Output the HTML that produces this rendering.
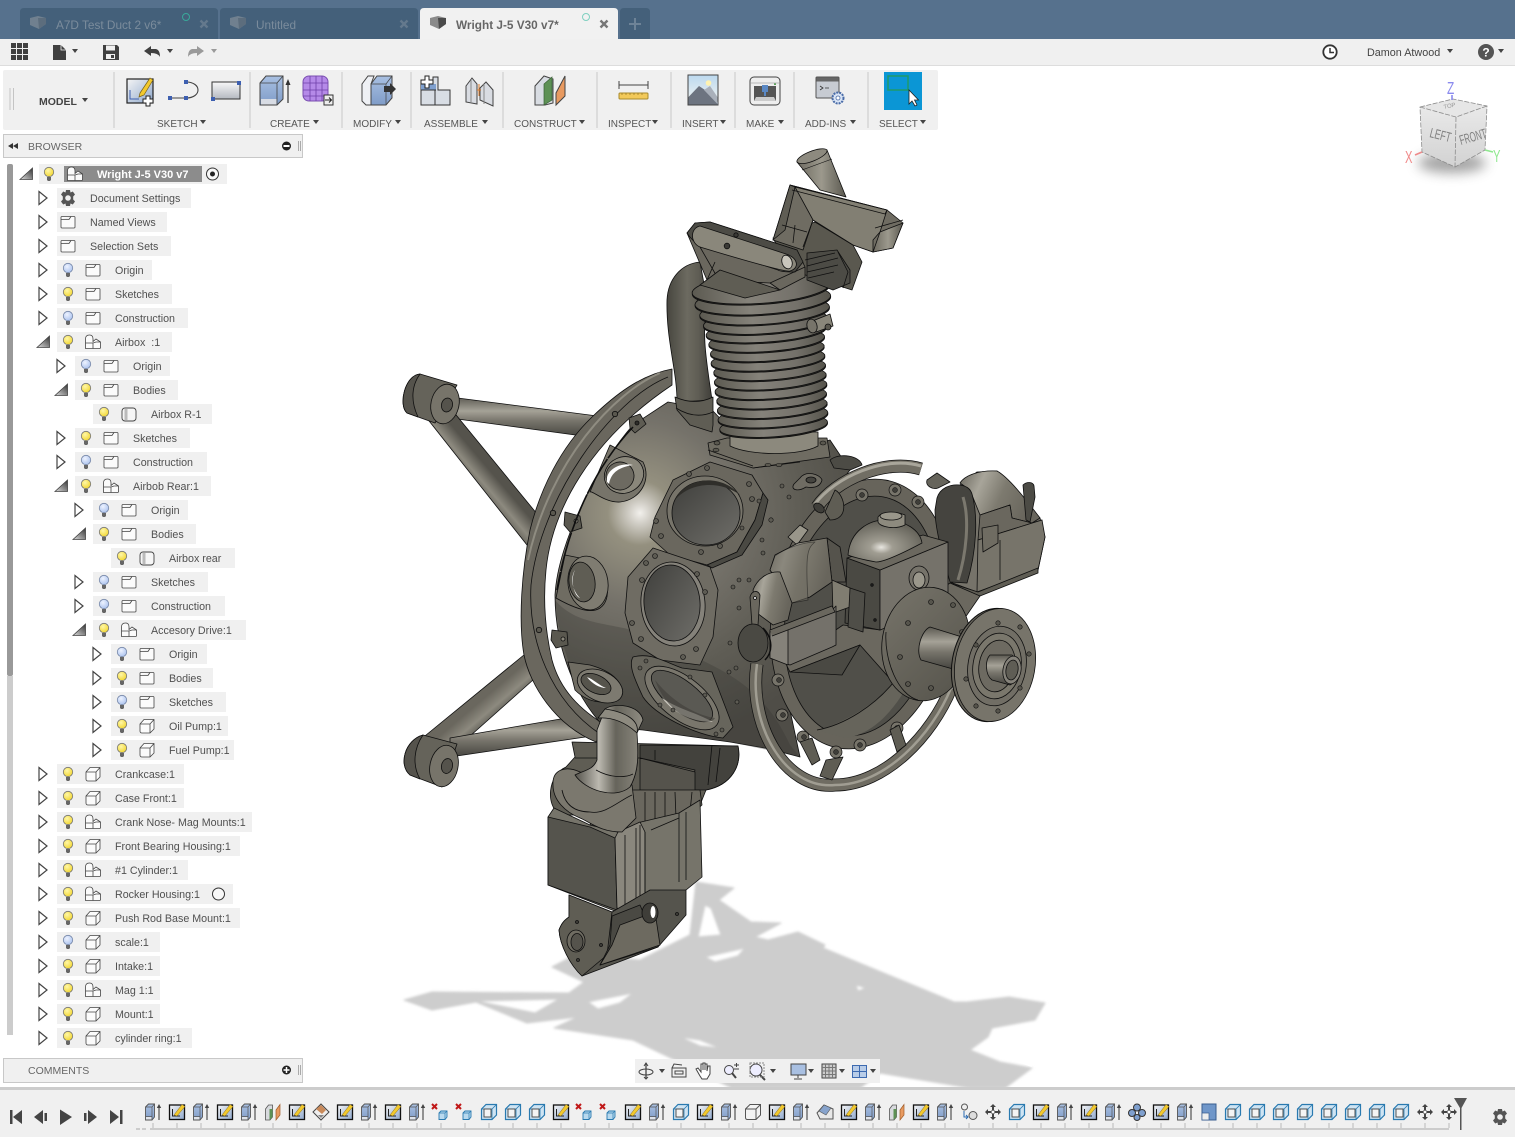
<!DOCTYPE html>
<html><head><meta charset="utf-8"><title>Wright J-5 V30 v7</title>
<style>
html,body{margin:0;padding:0;background:#fff;width:1515px;height:1137px;overflow:hidden}
svg{display:block}
text{font-family:"Liberation Sans",sans-serif}
.t{font-size:10.7px;fill:#505050}
.l{font-size:10px;fill:#555}
</style></head><body>
<svg width="1515" height="1137" viewBox="0 0 1515 1137" xmlns="http://www.w3.org/2000/svg">
<defs>
<radialGradient id="caseG" gradientUnits="userSpaceOnUse" cx="640" cy="513" r="230"><stop offset="0" stop-color="#f2f0ec"/><stop offset=".05" stop-color="#cfccc4"/><stop offset=".14" stop-color="#94907f"/><stop offset=".4" stop-color="#75726a"/><stop offset=".7" stop-color="#5f5d55"/><stop offset="1" stop-color="#4f4d47"/></radialGradient>
<linearGradient id="tV" x1="0" y1="0" x2="0" y2="1"><stop offset="0" stop-color="#5b5951"/><stop offset=".35" stop-color="#a5a297"/><stop offset=".6" stop-color="#77746b"/><stop offset="1" stop-color="#45443f"/></linearGradient>
<linearGradient id="tD" x1="0" y1="1" x2="1" y2="0"><stop offset="0" stop-color="#5d5b53"/><stop offset=".5" stop-color="#8d8a7f"/><stop offset="1" stop-color="#5d5b53"/></linearGradient>
<linearGradient id="tD1" gradientUnits="userSpaceOnUse" x1="470" y1="710" x2="487" y2="730"><stop offset="0" stop-color="#6a675e"/><stop offset=".5" stop-color="#8d8a7f"/><stop offset="1" stop-color="#4d4c46"/></linearGradient>
<linearGradient id="tD2" gradientUnits="userSpaceOnUse" x1="468" y1="485" x2="488" y2="468"><stop offset="0" stop-color="#55534c"/><stop offset=".5" stop-color="#8d8a7f"/><stop offset="1" stop-color="#55534c"/></linearGradient>
<linearGradient id="tH" x1="0" y1="0" x2="1" y2="0"><stop offset="0" stop-color="#47463f"/><stop offset=".45" stop-color="#6c6a60"/><stop offset=".7" stop-color="#5f5d54"/><stop offset="1" stop-color="#3f3e39"/></linearGradient>
<linearGradient id="pH" x1="0" y1="0" x2="1" y2="0"><stop offset="0" stop-color="#55534c"/><stop offset=".35" stop-color="#bcb9b0"/><stop offset=".6" stop-color="#66645b"/><stop offset="1" stop-color="#8f8c82"/></linearGradient>
<linearGradient id="fin" x1="0" y1="0" x2="1" y2="0"><stop offset="0" stop-color="#5c5a51"/><stop offset=".4" stop-color="#85827a"/><stop offset=".75" stop-color="#74716a"/><stop offset="1" stop-color="#55534b"/></linearGradient>
<linearGradient id="hole" x1="0" y1="0" x2="1" y2="1"><stop offset="0" stop-color="#3f3f3c"/><stop offset="1" stop-color="#6f6e69"/></linearGradient>
<radialGradient id="dome" cx=".45" cy=".65" r=".6"><stop offset="0" stop-color="#e8e6e0"/><stop offset=".25" stop-color="#a09d92"/><stop offset="1" stop-color="#66645b"/></radialGradient>
<linearGradient id="sh" x1="0" y1="0" x2="1" y2="0"><stop offset="0" stop-color="#6d6a60"/><stop offset=".5" stop-color="#9c998d"/><stop offset="1" stop-color="#5a584f"/></linearGradient>
<linearGradient id="hood" x1="0" y1="0" x2="1" y2=".3"><stop offset="0" stop-color="#6a675e"/><stop offset=".3" stop-color="#a8a59a"/><stop offset=".6" stop-color="#7d7a6f"/><stop offset="1" stop-color="#68655c"/></linearGradient>
<linearGradient id="disc" x1="0" y1="0" x2="1" y2="1"><stop offset="0" stop-color="#77746a"/><stop offset="1" stop-color="#55534b"/></linearGradient>
<linearGradient id="blu" x1="0" y1="0" x2="0" y2="1"><stop offset="0" stop-color="#a9c0e2"/><stop offset="1" stop-color="#7f9cc8"/></linearGradient>
<linearGradient id="gr" x1="0" y1="0" x2="0" y2="1"><stop offset="0" stop-color="#f8f8f8"/><stop offset="1" stop-color="#b4b8c0"/></linearGradient>
<linearGradient id="sk" x1="0" y1="0" x2="1" y2="1"><stop offset="0" stop-color="#f5f5f5"/><stop offset="1" stop-color="#8fa8cc"/></linearGradient>
<linearGradient id="cube" x1="0" y1="0" x2="0" y2="1"><stop offset="0" stop-color="#ececec"/><stop offset="1" stop-color="#d2d2d2"/></linearGradient>
<linearGradient id="opn" x1="0" y1="1" x2="1" y2="0"><stop offset="0" stop-color="#ddd"/><stop offset="1" stop-color="#333"/></linearGradient>
<linearGradient id="sky" x1="0" y1="0" x2="0" y2="1"><stop offset="0" stop-color="#bcd9ef"/><stop offset="1" stop-color="#f5f5f0"/></linearGradient>
<radialGradient id="yb" cx=".4" cy=".35" r=".7"><stop offset="0" stop-color="#fff7a8"/><stop offset="1" stop-color="#f1d52c"/></radialGradient>
<radialGradient id="bb" cx=".4" cy=".35" r=".7"><stop offset="0" stop-color="#eef3ff"/><stop offset="1" stop-color="#a9c1ee"/></radialGradient>
<filter id="blur" x="-50%" y="-100%" width="200%" height="300%"><feGaussianBlur stdDeviation="6"/></filter>
<filter id="blur1" x="-5%" y="-5%" width="110%" height="110%"><feGaussianBlur stdDeviation="1.200"/></filter>

<path id="ar" d="M-4,-6.5 L4,0 L-4,6.5Z" fill="#fff" stroke="#444" stroke-width="1.2"/>
<path id="op" d="M-7,5.5 L5.5,5.5 L5.5,-6Z" fill="url(#opn)" stroke="#444" stroke-width=".8"/>
<g id="by"><circle cy="-2" r="4.7" fill="url(#yb)" stroke="#777" stroke-width=".8"/><path d="M-2,3 H2 V6 L1,7 H-1 L-2,6Z" fill="#666"/></g>
<g id="bl"><circle cy="-2" r="4.7" fill="url(#bb)" stroke="#7788a8" stroke-width=".8"/><path d="M-2,3 H2 V6 L1,7 H-1 L-2,6Z" fill="#666"/></g>
<path id="fd" d="M-7,-4.5 Q-7,-5.5 -6,-5.5 H6 Q7,-5.5 7,-4.5 V5 Q7,6 6,6 H-6 Q-7,6 -7,5Z M-7,-2.5 H1 L3,-5.5" fill="#fbfbfb" stroke="#444" stroke-width=".8"/>
<path id="cp" d="M-7.5,6.5 V-3 Q-7.5,-7 -3.5,-7 Q0,-7 0,-3 V-.5 L3,-3 L7.5,0 V5.5 Q7.5,6.5 6.5,6.5Z M-7.5,1 H0 V6.500 M0,1 L3,0 L7.5,0" fill="#fbfbfb" stroke="#444" stroke-width=".8"/>
<path id="bx" d="M-7,-2 L-3,-6.5 H7 V3 L3,7 H-5 Q-7,7 -7,5Z M-7,-2 Q-2,-2 3,-2 V7 M3,-2 L7,-6.5" fill="#fbfbfb" stroke="#444" stroke-width=".8"/>
<g id="bd"><rect x="-7" y="-6" width="14" height="13" rx="3" fill="#f6f6f6" stroke="#444" stroke-width=".9"/><path d="M-3,-5 V6" stroke="#bbb" stroke-width="3"/></g>
<path id="dn" d="M-3,-2 H3 L0,2Z" fill="#444"/>

<g id="te"><path d="M-7.5,-5 L-4.5,-8 H1.5 V5 L-1,8 H-7.5Z" fill="url(#blu)" stroke="#555" stroke-width=".9"/><path d="M-7.5,-5 H-1 V8 M-1,-5 L1.5,-8 M-7.5,4.5 H-1" fill="none" stroke="#555" stroke-width=".7"/><path d="M-7,5 H-1.5 V7.5 H-7Z" fill="#dfe3ea"/><path d="M6,8 V-6" stroke="#444" stroke-width="1.1"/><path d="M3.8,-4 L6,-8 L8.2,-4Z" fill="#444"/></g>
<g id="ts"><rect x="-7.5" y="-7" width="15" height="14.5" fill="url(#sk)" stroke="#111" stroke-width="1.3"/><path d="M-4.5,-3 V4 H3" stroke="#222" fill="none"/><path d="M-3,3 L5,-7.5 L8,-5.5 L0,4Z" fill="#f2c92e" stroke="#8a6d1a" stroke-width=".5"/></g>
<g id="tx"><path d="M-9,-8 L-4,-3 M-4,-8 L-9,-3" stroke="#c01818" stroke-width="2"/><path d="M-2,1 L0,-1 H6 V5 L4,7.5 H-2Z" fill="#b9d9ee" stroke="#2a7ab0" stroke-width=".9"/><path d="M-2,1 H4 V7.5 M4,1 L6,-1" fill="none" stroke="#2a7ab0" stroke-width=".7"/></g>
<g id="tb"><path d="M-7.5,-3 L-3,-7.5 H7.5 V3 L3,7.5 H-7.5Z" fill="#cfe4f3" stroke="#2a7ab0" stroke-width="1.2"/><path d="M-7.5,-3 H3 V7.5 M3,-3 L7.5,-7.5" fill="none" stroke="#2a7ab0" stroke-width=".8"/><rect x="-5" y="-3" width="7" height="8" fill="#f4f4f4" stroke="#444" stroke-width=".9"/></g>
<g id="tp"><path d="M-7.5,-3 L-4.5,-7 H-.5 V5 L-3,8 H-7.5Z" fill="#d8dade" stroke="#555" stroke-width=".8"/><path d="M-3.5,-3 H-.5 V5 L-3.5,8Z" fill="#5d9155"/><path d="M3,-2 L7,-7.5 V3 L3,8Z" fill="#e89a60" stroke="#a05c2a" stroke-width=".7"/></g>
<g id="tm"><path d="M0,-8 L3,-5 H1 V-2 H-1 V-5 H-3Z M0,8 L3,5 H1 V2 H-1 V5 H-3Z M-8,0 L-5,-3 V-1 H-2 V1 H-5 V3Z M8,0 L5,-3 V-1 H2 V1 H5 V3Z" fill="#444"/><circle r="1.8" fill="#fff" stroke="#555" stroke-width=".8"/></g>
<g id="tsb"><path d="M-7,-8 H7 V8 H-7Z" fill="#6f96c9" stroke="#3a5e90"/><path d="M-7,1 H0 V8 H-7Z" fill="#eee" stroke="#3a5e90" stroke-width=".7"/></g>
</defs>

<!-- TITLE BAR -->
<rect width="1515" height="39" fill="#56718d"/>
<path d="M20,39 V12 Q20,8 24,8 H214 Q218,8 218,12 V39Z" fill="#44607a"/>
<path d="M220,39 V12 Q220,8 224,8 H414 Q418,8 418,12 V39Z" fill="#44607a"/>
<path d="M420,39 V12 Q420,8 424,8 H614 Q618,8 618,12 V39Z" fill="#f1f1f1"/>
<path d="M620,39 V12 Q620,8 624,8 H646 Q650,8 650,12 V39Z" fill="#44607a"/>
<path d="M30,18 L38,16 L46,18 V24 L39,29 L30,25Z" fill="#70808f"/><path d="M38,18 L46,18 V24 L39,29Z" fill="#5c6d7d"/>
<path d="M230,18 L238,16 L246,18 V24 L239,29 L230,25Z" fill="#70808f"/><path d="M238,18 L246,18 V24 L239,29Z" fill="#5c6d7d"/>
<path d="M430,18 L438,16 L446,18 V24 L439,29 L430,25Z" fill="#8a8a8a"/><path d="M438,18 L446,18 V24 L439,29Z" fill="#4a4a4a"/>
<text x="56" y="29" font-size="11.8" fill="#7b8c9c">A7D Test Duct 2 v6*</text>
<text x="256" y="29" font-size="11.8" fill="#7b8c9c">Untitled</text>
<text x="456" y="29" font-size="11.8" font-weight="bold" fill="#666">Wright J-5 V30 v7*</text>
<circle cx="186" cy="17" r="3.5" fill="none" stroke="#3aa89a" stroke-width="1"/>
<circle cx="586" cy="17" r="3.5" fill="none" stroke="#7fd0c0" stroke-width="1"/>
<path d="M200.5,20.5 L207.5,27.5 M207.5,20.5 L200.5,27.5 M400.5,20.5 L407.5,27.5 M407.5,20.5 L400.5,27.5" stroke="#64798d" stroke-width="2.4"/>
<path d="M600.5,20.5 L607.5,27.5 M607.5,20.5 L600.5,27.5" stroke="#777" stroke-width="2.4"/>
<path d="M635,18 V30 M629,24 H641" stroke="#6e8397" stroke-width="2"/>

<!-- MENU BAR -->
<rect y="39" width="1515" height="26" fill="#f0f0f0"/><rect y="65" width="1515" height="1" fill="#ddd"/>
<g fill="#404040"><rect x="11" y="43" width="5" height="5"/><rect x="17" y="43" width="5" height="5"/><rect x="23" y="43" width="5" height="5"/><rect x="11" y="49" width="5" height="5"/><rect x="17" y="49" width="5" height="5"/><rect x="23" y="49" width="5" height="5"/><rect x="11" y="55" width="5" height="5"/><rect x="17" y="55" width="5" height="5"/><rect x="23" y="55" width="5" height="5"/></g>
<path d="M53,45 H61 L66,50 V60 H53Z" fill="#404040"/><path d="M61,45 V50 H66" fill="none" stroke="#f0f0f0" stroke-width=".8"/>
<use href="#dn" x="75" y="51"/>
<path d="M103,45 H117 L119,47 V60 H103Z" fill="#404040"/><rect x="106" y="45.5" width="9" height="5" fill="#f0f0f0"/><rect x="106" y="54" width="9" height="5" fill="#f0f0f0"/><rect x="111" y="55" width="3" height="3" fill="#404040"/>
<path d="M144,51 L151,46 V49 H156 Q160,50 160,57 Q158,53 151,53 V56Z" fill="#404040"/><use href="#dn" x="170" y="51"/>
<path d="M204,51 L197,46 V49 H192 Q188,50 188,57 Q190,53 197,53 V56Z" fill="#9a9a9a"/><use href="#dn" x="214" y="51" opacity=".5"/>
<circle cx="1330" cy="52" r="6.7" fill="#fff" stroke="#333" stroke-width="1.8"/><path d="M1330,48 V52.5 H1334" fill="none" stroke="#333" stroke-width="1.5"/>
<text x="1367" y="56" font-size="10.8" fill="#444">Damon Atwood</text><use href="#dn" x="1450" y="51"/>
<circle cx="1486" cy="52" r="8" fill="#555"/><text x="1486" y="56.5" font-size="12" font-weight="bold" fill="#fff" text-anchor="middle">?</text><use href="#dn" x="1501" y="51"/>

<!-- TOOLBAR -->
<rect x="3" y="70" width="935" height="60" rx="2" fill="#f0f0f0"/>
<path d="M10,88 V110 M13.5,88 V110" stroke="#c4c4c4"/>
<g fill="#dcdcdc"><rect x="113" y="72" width="2" height="56"/><rect x="249" y="72" width="2" height="56"/><rect x="341" y="72" width="2" height="56"/><rect x="410" y="72" width="2" height="56"/><rect x="502" y="72" width="2" height="56"/><rect x="596" y="72" width="2" height="56"/><rect x="670" y="72" width="2" height="56"/><rect x="734" y="72" width="2" height="56"/><rect x="793" y="72" width="2" height="56"/><rect x="867" y="72" width="2" height="56"/></g>
<text x="39" y="105" font-size="10.5" font-weight="bold" fill="#444">MODEL</text><use href="#dn" x="85" y="100"/>
<text class="l" x="157" y="127">SKETCH</text><text class="l" x="270" y="127">CREATE</text><text class="l" x="353" y="127">MODIFY</text><text class="l" x="424" y="127">ASSEMBLE</text><text class="l" x="514" y="127">CONSTRUCT</text><text class="l" x="608" y="127">INSPECT</text><text class="l" x="682" y="127">INSERT</text><text class="l" x="746" y="127">MAKE</text><text class="l" x="805" y="127">ADD-INS</text><text class="l" x="879" y="127">SELECT</text>
<use href="#dn" x="203" y="122"/><use href="#dn" x="316" y="122"/><use href="#dn" x="398" y="122"/><use href="#dn" x="485" y="122"/><use href="#dn" x="582" y="122"/><use href="#dn" x="655" y="122"/><use href="#dn" x="723" y="122"/><use href="#dn" x="781" y="122"/><use href="#dn" x="853" y="122"/><use href="#dn" x="923" y="122"/>
<!-- sketch -->
<rect x="127" y="79" width="26" height="24" fill="url(#sk)" stroke="#222" stroke-width="1.2"/><path d="M130,90 V99 H139" stroke="#3d5fb0" fill="none"/><path d="M140,93 L150,78 L153,80 L144,95 L139,97Z" fill="#f2c92e" stroke="#77601c" stroke-width=".7"/>
<path d="M146,96 H150 V99 H153 V103 H150 V106 H146 V103 H143 V99 H146Z" fill="#fff" stroke="#222"/>
<path d="M170,98 H186 M186,82 C202,82 202,98 186,98" fill="none" stroke="#444" stroke-width="1.1"/><g fill="#3d5fb0"><rect x="168" y="96" width="4" height="4"/><rect x="184" y="96" width="4" height="4"/><rect x="184" y="80" width="4" height="4"/></g>
<rect x="212" y="82" width="28" height="17" fill="url(#gr)" stroke="#333"/><g fill="#3d5fb0"><rect x="237" y="81" width="4" height="4"/><rect x="211" y="97" width="4" height="4"/></g>
<!-- create -->
<path d="M260,83 L266,76 H283 V99 L277,105 H260Z" fill="url(#blu)" stroke="#444"/><path d="M260,83 H277 V105 M277,83 L283,76" fill="none" stroke="#444" stroke-width=".8"/><rect x="261" y="99" width="15.5" height="5.5" fill="#d8dce4"/>
<path d="M288,103 V83" stroke="#333" stroke-width="1.2"/><path d="M285.5,85 L288,79 L290.5,85Z" fill="#333"/>
<rect x="303" y="76" width="25" height="25" rx="6" fill="#b58ae8" stroke="#7a4fb0"/><path d="M303,83 H328 M303,90 H328 M303,96 H328 M310,76 V101 M316,76 V101 M322,76 V101" stroke="#6f3fa8" stroke-width=".8"/>
<rect x="324" y="95" width="9" height="10" fill="#eee" stroke="#333"/><path d="M325,100 H331 M329,97.5 L331.5,100 L329,102.5" fill="none" stroke="#222"/>
<!-- modify -->
<path d="M362,101 V84 L368,76 H374 L371,84 V105 H366Z" fill="#eef0f4" stroke="#444"/><path d="M371,84 L377,76 H392 V98 L386,105 H371Z" fill="url(#blu)" stroke="#444"/><path d="M371,84 H386 V105 M386,84 L392,76" fill="none" stroke="#444" stroke-width=".7"/><path d="M384,86 H390 V83 L396,89 L390,95 V92 H384Z" fill="#333"/>
<!-- assemble -->
<path d="M421,84 H433 V77 H438 V90 H450 V105 H421Z" fill="#d8dde4" stroke="#333"/><path d="M421,90 H436 V84 H421Z" fill="#7fa0cf"/><path d="M435,90 V105 M421,90 H436" stroke="#333" fill="none"/><path d="M425,76 H429 V80 H433 V84 H429 V88 H425 V84 H421 V80 H425Z" fill="#fff" stroke="#222"/>
<path d="M466,102 V86 L472,78 L477,84 V104Z M480,100 V88 L486,82 L493,90 V106Z" fill="#d9dce2" stroke="#444"/><path d="M471,80 V102 M484,84 V104" stroke="#888" fill="none"/><path d="M477,90 H481 M479,84 V96" stroke="#d87a2e"/>
<!-- construct -->
<path d="M535,86 L544,76 L553,79 V103 L545,105 H535Z" fill="#d8dce2" stroke="#444"/><path d="M544,84 L552,77 V100 L544,105Z" fill="#5d9155" stroke="#3b6238" stroke-width=".7"/><path d="M556,93 L565,76 V96 L556,105Z" fill="#e89a60" stroke="#444"/>
<!-- inspect -->
<path d="M619,85 H648 M619,81 V89 M648,81 V89" fill="none" stroke="#444"/><rect x="619" y="93" width="29" height="6" rx="1" fill="#f2c95a" stroke="#a88a2e"/><path d="M622,93 V95 M626,93 V95 M630,93 V95 M634,93 V95 M638,93 V95 M642,93 V95" stroke="#8a6a1a" stroke-width=".6"/>
<!-- insert -->
<rect x="688" y="75" width="30" height="30" fill="url(#sky)" stroke="#444"/><circle cx="708.5" cy="83" r="2.8" fill="#fff3b0"/><path d="M688.5,97 L699,86 L708,92 L718,102 V104.5 H688.5Z" fill="#6d7480"/><path d="M704,90 L710,86 L717.5,97 V104 Z" fill="#a9b0ba"/>
<!-- make -->
<rect x="750" y="77" width="30" height="28" rx="4" fill="#eee" stroke="#444"/><rect x="754" y="86" width="22" height="15" fill="#555"/><path d="M756,97 H774 L776,101 H754Z" fill="#ccc"/><rect x="762" y="85" width="6" height="7" fill="#5a88c4"/><path d="M765,92 V96" stroke="#5a88c4" stroke-width="2"/><circle cx="775" cy="84" r="1" fill="#2a8a2a"/><path d="M751,83 H779" stroke="#bbb"/>
<!-- add-ins -->
<rect x="816" y="77" width="23" height="21" rx="1" fill="#c7cbd2" stroke="#555"/><rect x="816.5" y="77.5" width="22" height="4" fill="#666"/><path d="M820,86 L823,88 L820,90 M825,88 H829" fill="none" stroke="#333" stroke-width=".8"/>
<circle cx="838" cy="98" r="5.5" fill="#d9e4f5" stroke="#4a6ca8" stroke-width="2" stroke-dasharray="2 1"/><circle cx="838" cy="98" r="2" fill="#fff" stroke="#4a6ca8" stroke-width=".8"/>
<!-- select -->
<rect x="884" y="72" width="38" height="38" fill="#0b96d5"/><rect x="888" y="76" width="20" height="14" fill="none" stroke="#1f9a6a" stroke-width="1.5"/><path d="M909,90 V104 L912,101 L915,106 L917,105 L914.5,100 L918.5,100Z" fill="#fff" stroke="#222" stroke-width=".8"/>

<!-- VIEWCUBE -->
<ellipse cx="1452" cy="163" rx="34" ry="10" fill="#666" opacity=".6" filter="url(#blur)"/>
<path d="M1420,107 L1453,99 L1487,106 L1485,150 L1455,167 L1422,152Z" fill="url(#cube)"/>
<path d="M1420,107 L1453,99 L1487,106 L1456,117Z" fill="#e6e6e6"/>
<path d="M1420,107 L1453,99 L1487,106 L1485,150 L1455,167 L1422,152Z M1420,107 L1456,117 L1487,106 M1456,117 L1455,167" fill="none" stroke="#8c8c8c" stroke-width=".8" stroke-dasharray="5 1.5"/>
<text transform="translate(1429,137) rotate(14) scale(.8,1.25)" font-size="11" fill="#808080">LEFT</text>
<text transform="translate(1461,145) rotate(-16) scale(.72,1.25)" font-size="11" fill="#808080">FRONT</text>
<text transform="translate(1444,109) rotate(-12)" font-size="6" fill="#999">TOP</text>
<path d="M1452,95 V100" stroke="#8a8aee" stroke-width="1.6"/><path d="M1485,150 L1493,152" stroke="#8fe88f" stroke-width="1.6"/><path d="M1415,155 L1422,152" stroke="#ee8a8a" stroke-width="1.6"/>
<text transform="translate(1447,94) scale(.85,1.25)" font-size="14" fill="#8a8aee">Z</text><text transform="translate(1405,163) scale(.8,1.25)" font-size="14" fill="#f08a8a">X</text><text transform="translate(1493,162) scale(.8,1.25)" font-size="14" fill="#90e890">Y</text>

<!-- SHADOW -->
<g filter="url(#blur1)"><path fill="#cdcdcd" fill-rule="evenodd" stroke="#cdcdcd" stroke-width="1" stroke-linejoin="round" d="M404,1000 L432,992 L569,993 L584,982 L552,967 L575,955 L640,960 L690,935 L696,882 L734,888 L719,900 L751,922 L781,923 L755,937 L768,940 L798,932 L825,945 L823,948 L954,1002 L967,1002 L1009,997 L1045,1003 L1035,1020 L992,1028 L988,1037 L970,1050 L1000,1062 L1032,1068 L1005,1088 L970,1088 L880,1073 L860,1088 L732,1088 L671,1058 L633,1040 L554,1028 L578,1017 L527,1023 L476,1002 L432,1010 Z
M476,1001 L559,999 L535,1013 Z M588,1002 L597,1000 L633,993 L620,1003 L598,1009 Z M705,957 L745,948 L738,956 L715,962 Z M711,908 L721,935 L698,937 L705,905Z M856,985 L866,988 L858,991Z M680,1037 L700,1040 L720,1048 L700,1046Z"/></g>
<path d="M1000,1055 L1032,1066" stroke="#fff" stroke-width="2"/>

<!-- ENGINE -->
<g stroke="#0f0f0f" stroke-width=".8" stroke-linejoin="round">
<!-- mount tubes -->
<path d="M450,397 L605,417 L590,437 L450,418Z" fill="url(#tV)"/>
<path d="M452,410 L422,412 L527,545 L542,520Z" fill="url(#tD2)"/>
<path d="M530,650 L542,672 L460,745 L420,740Z" fill="url(#tD1)"/>
<path d="M450,738 L578,716 L592,736 L450,757Z" fill="url(#tV)"/>
<!-- bosses -->
<path d="M420,374 L457,385 L435,423 L407,413 C398,405 405,375 420,374Z" fill="#65635a"/>
<path d="M420,374 C405,375 398,405 407,413 L418,417 C410,400 412,385 420,374Z" fill="#55534c"/>
<ellipse cx="445" cy="404" rx="14" ry="20" transform="rotate(12 445 404)" fill="#77746a"/>
<ellipse cx="447" cy="405" rx="5.5" ry="7" transform="rotate(12 447 405)" fill="#55534c"/>
<path d="M423,735 L457,744 L442,787 L410,775 C398,765 405,740 423,735Z" fill="#65635a"/>
<path d="M423,735 C405,740 398,765 410,775 L420,779 C412,765 414,748 423,735Z" fill="#55534c"/>
<ellipse cx="444" cy="766" rx="14" ry="21" transform="rotate(12 444 766)" fill="#77746a"/>
<ellipse cx="447" cy="766" rx="5.5" ry="7.5" transform="rotate(12 447 766)" fill="#55534c"/>
<!-- sump behind -->
<path d="M572,742 L738,746 C742,765 732,785 706,790 L700,805 L600,815 L560,815 C545,805 548,775 566,767 L575,757Z" fill="#5f5d54"/>
<path d="M640,745 L738,746 C742,765 732,785 706,790 L690,790 L695,770 L640,758Z" fill="#43423d"/>
<path d="M640,758 L695,772 L695,793 L640,790 Z" fill="#55534c"/>
<path d="M575,758 L640,758 M655,750 V760 M712,745 L708,785 M720,748 L716,782" fill="none"/>
<path d="M600,790 L700,790 L702,805 L680,825 L620,835 L590,825Z" fill="#6a675e"/>
<path d="M645,792 V825 M655,792 V822 M665,792 V820 M675,792 L676,818 M692,792 L690,812" fill="none"/>
<!-- ring -->
<path d="M672,369 C640,375 615,395 592,417 C560,448 540,490 530,530 C522,570 518,620 524,655 C530,685 555,725 596,742 L607,726 C580,710 560,690 552,660 C545,630 543,600 546,570 C552,510 590,440 672,385Z" fill="#6a675e"/>
<path d="M668,377 C610,400 540,500 531,585 C528,640 550,700 600,734" fill="none"/>
<path d="M660,373 C615,392 550,460 528,560" fill="none" stroke="#8f8c81" stroke-width="2"/>
<circle cx="615" cy="414" r="2.700" fill="#5a584f"/><circle cx="553" cy="513" r="2.700" fill="#5a584f"/><circle cx="539" cy="630" r="2.700" fill="#5a584f"/>
<!-- case -->
<path d="M668,402 L633,425 C600,462 558,540 555,595 C555,640 570,690 604,727 L643,730 L730,742 L770,749 L800,757 L775,640 L795,540 L850,470 L830,440 L760,460 L712,410Z" fill="url(#caseG)"/>
<path d="M555,600 C580,630 620,620 660,640 C720,670 760,680 790,745 L800,757 L730,742 L643,730 L604,727 C580,700 560,650 555,600Z" fill="#33322d" opacity=".28" stroke="none"/>
<!-- left ports -->
<path d="M610,445 L643,462 C652,480 640,500 620,502 C605,503 592,490 590,492Z" fill="#77746a"/>
<ellipse cx="624" cy="475" rx="20" ry="18" transform="rotate(-25 624 475)" fill="#8a877b"/><ellipse cx="620" cy="476" rx="14" ry="14" transform="rotate(-25 620 476)" fill="#6d6a61"/>
<path d="M607,482 C605,470 620,462 633,465 C620,467 611,472 609,484Z" fill="#fff" stroke="none"/>
<path d="M565,555 L590,560 C610,575 612,600 600,608 C590,615 570,606 556,598Z" fill="#6f6c62"/>
<ellipse cx="588" cy="583" rx="20" ry="27" transform="rotate(-8 588 583)" fill="#7f7c71"/><ellipse cx="582" cy="582" rx="13" ry="20" transform="rotate(-8 582 582)" fill="#5f5d54"/>
<path d="M575,570 C570,578 572,590 580,598 C574,596 570,580 575,570Z" fill="#fff" stroke="none"/>
<path d="M568,662 L590,665 C615,672 625,685 620,695 C610,705 590,705 575,690Z" fill="#6f6c62"/>
<ellipse cx="600" cy="686" rx="24" ry="15" transform="rotate(25 600 686)" fill="#7d7a70"/><ellipse cx="596" cy="684" rx="16" ry="9" transform="rotate(25 596 684)" fill="#56544c"/>
<path d="M587,677 C593,679 600,686 606,688 C600,688 592,684 587,677Z" fill="#fff" stroke="none"/>
<!-- ring clips -->
<path d="M629,418 L640,414 L646,424 L635,433 L630,428Z" fill="#5e5c53"/><circle cx="637" cy="423" r="2" fill="#2f2e2a"/>
<path d="M565,512 L580,516 L582,528 L570,532 L564,525Z" fill="#5a584f"/><circle cx="576" cy="521" r="2" fill="#8a877b"/>
<path d="M552,630 L567,632 L568,645 L556,648 L551,640Z" fill="#5a584f"/><circle cx="563" cy="639" r="2" fill="#8a877b"/>
<path d="M633,427 C600,462 570,515 557,590" fill="none" stroke-dasharray="40 1" stroke-width="1.6"/>
<!-- flanges -->
<path d="M673,480 L710,462 L752,475 L763,493 L755,520 L737,552 L707,565 L670,555 L650,537 L655,517Z" fill="#6a675e"/>
<path d="M737,552 L755,520 L763,493 L768,500 L762,525 L742,555 L712,568 L707,565Z" fill="#4a4943"/>
<ellipse cx="705" cy="511" rx="38" ry="35" fill="#77746a"/>
<ellipse cx="706" cy="513" rx="34" ry="32" fill="url(#hole)"/>
<path d="M675,500 C685,478 720,472 740,495 C720,480 690,482 675,500Z" fill="#2f2e2a" stroke="none"/>
<path d="M653,548 L710,567 L718,590 L713,637 L700,665 L660,660 L633,643 L625,613 L628,577Z" fill="#6f6c63"/>
<ellipse cx="673" cy="604" rx="32" ry="42" transform="rotate(-5 673 604)" fill="#85827a"/>
<ellipse cx="672" cy="603" rx="28" ry="38" transform="rotate(-5 672 603)" fill="url(#hole)"/>
<path d="M633,657 C650,652 665,662 682,668 L712,672 L733,727 L723,738 C695,735 655,715 643,697 C635,680 628,665 633,657Z" fill="#67655c"/>
<ellipse cx="682" cy="698" rx="44" ry="21" transform="rotate(38 682 698)" fill="#79766c"/>
<ellipse cx="682" cy="696" rx="37" ry="15" transform="rotate(38 682 696)" fill="#5a5953"/>
<path d="M662,698 C675,715 695,722 713,722 C695,712 680,710 662,698Z" fill="#c9c6bc" stroke="none"/>
<path d="M655,680 C675,705 700,716 715,718 C710,728 670,722 655,680Z" fill="#3f3e39" opacity=".6" stroke="none"/>
<!-- flange bolts -->
<g fill="#5d5b53" stroke-width=".6">
<circle cx="689" cy="474" r="2.500"/><circle cx="707" cy="468" r="2.500"/><circle cx="749" cy="484" r="2.500"/><circle cx="752" cy="499" r="2.500"/><circle cx="720" cy="546" r="2.500"/><circle cx="701" cy="552" r="2.500"/><circle cx="661" cy="536" r="2.500"/><circle cx="656" cy="521" r="2.500"/><circle cx="742" cy="528" r="2"/>
<circle cx="646" cy="563" r="2.500"/><circle cx="655" cy="556" r="2.500"/><circle cx="697" cy="574" r="2.500"/><circle cx="705" cy="592" r="2.500"/><circle cx="696" cy="649" r="2.500"/><circle cx="683" cy="657" r="2.500"/><circle cx="641" cy="639" r="2.500"/><circle cx="632" cy="623" r="2.500"/><circle cx="642" cy="580" r="2.500"/>
<circle cx="646" cy="661" r="2"/><circle cx="640" cy="668" r="2"/><circle cx="690" cy="677" r="2"/><circle cx="705" cy="695" r="2"/><circle cx="722" cy="730" r="2"/><circle cx="716" cy="734" r="2"/><circle cx="673" cy="710" r="2"/><circle cx="660" cy="705" r="2"/>
<circle cx="771" cy="520" r="2.200"/><circle cx="762" cy="540" r="2"/><circle cx="763" cy="553" r="2"/><circle cx="749" cy="580" r="2"/><circle cx="739" cy="580" r="2"/><circle cx="739" cy="608" r="2"/><circle cx="733" cy="587" r="2"/><circle cx="730" cy="643" r="2"/><circle cx="729" cy="672" r="2"/><circle cx="736" cy="668" r="2"/><circle cx="737" cy="702" r="2"/><circle cx="761" cy="715" r="2"/>
<circle cx="782" cy="486" r="2"/><circle cx="789" cy="497" r="2"/><circle cx="759" cy="501" r="2"/>
</g>
<path d="M800,478 C806,470 820,474 822,480 C820,488 812,488 806,487 C798,492 790,490 794,484Z" fill="#6f6c63"/><ellipse cx="811" cy="480" rx="5" ry="3" fill="#45443f"/>
<path d="M830,460 C840,452 860,456 862,465 L850,470 L834,468Z" fill="#4c4b45"/>
<!-- rim -->
<ellipse cx="862" cy="614" rx="90" ry="136" transform="rotate(10 862 614)" fill="#67645b"/>
<ellipse cx="862" cy="616" rx="76" ry="121" transform="rotate(10 862 616)" fill="#504f49"/>
<path d="M905,690 C890,715 870,735 845,738 L817,730 C840,725 875,705 893,683Z" fill="#66645b" stroke="none"/>
<path d="M817,730 C845,725 875,705 893,683" fill="none"/>
<g fill="#77746a" stroke-width=".7"><circle cx="778" cy="680" r="6"/><circle cx="782" cy="715" r="6"/><circle cx="803" cy="737" r="6"/><circle cx="836" cy="752" r="6"/><circle cx="860" cy="745" r="6"/><circle cx="897" cy="728" r="6"/><circle cx="862" cy="495" r="6"/><circle cx="895" cy="490" r="6"/><circle cx="918" cy="502" r="6"/></g>
<g fill="#3f3e39" stroke-width=".5"><circle cx="779" cy="680" r="2.500"/><circle cx="783" cy="715" r="2.500"/><circle cx="804" cy="737" r="2.500"/><circle cx="836" cy="752" r="2.500"/><circle cx="860" cy="745" r="2.500"/><circle cx="897" cy="728" r="2.500"/><circle cx="862" cy="495" r="2.500"/><circle cx="895" cy="490" r="2.500"/><circle cx="918" cy="502" r="2.500"/></g>
<!-- tube ring -->
<g fill="none">
<path d="M921,469 C885,458 835,480 817,507" stroke="#111" stroke-width="13"/><path d="M921,469 C885,458 835,480 817,507" stroke="#716e64" stroke-width="11.5"/><path d="M921,466 C885,455 835,477 815,504" stroke="#a9a69b" stroke-width="3"/>
<path d="M757,664 C748,725 785,790 835,785 C885,785 932,735 951,688" stroke="#111" stroke-width="13"/><path d="M757,664 C748,725 785,790 835,785 C885,785 932,735 951,688" stroke="#6f6c62" stroke-width="11.5"/><path d="M757,664 C748,725 785,790 835,785 C885,785 932,735 951,688" stroke="#a09d92" stroke-width="2.500"/>
</g>
<ellipse cx="819" cy="508" rx="6" ry="4" transform="rotate(40 819 508)" fill="#3f3e39"/>
<path d="M788,537 L800,525 L808,530 L797,545Z" fill="#99968a"/>
<path d="M826,760 L820,776 L832,780 L843,757Z M890,730 L897,752 L906,745 L899,725Z M800,742 L812,765 L820,760 L812,738Z" fill="#5f5d54"/>
<path d="M835,490 C845,495 850,520 830,520 L825,512Z" fill="#5f5d54"/>
<!-- push tube -->
<path d="M677,402 C677,370 666,340 667,300 C668,280 680,264 700,262 L708,306 C700,330 708,370 712,400Z" fill="url(#tH)"/>
<path d="M675,397 Q695,406 713,397 V425 L712,432 L690,425 L677,410Z" fill="#5f5d54"/>
<path d="M676,408 Q695,420 713,412" fill="none"/>
<!-- cylinder base -->
<path d="M708,443 L727,438 L827,438 L830,457 L753,468 L710,455Z" fill="#6f6c62"/>
<path d="M730,432 H818 V446 C800,456 750,456 730,446Z" fill="#8c897d"/>
<path d="M708,450 L753,466 M753,468 L800,462" fill="none"/>
<g fill="#5a584f" stroke-width=".6"><ellipse cx="717" cy="443" rx="3" ry="2"/><ellipse cx="823" cy="443" rx="3" ry="2"/><ellipse cx="768" cy="465" rx="3" ry="1.500"/><ellipse cx="779" cy="465" rx="3" ry="1.500"/><ellipse cx="716" cy="450" rx="3" ry="1.800"/></g>
<!-- fins -->
<g transform="rotate(-4 768 360)">
<ellipse cx="769" cy="427.200" rx="54" ry="11" fill="#2c2b27"/><ellipse cx="769" cy="426" rx="54" ry="11" fill="url(#fin)"/>
<ellipse cx="769" cy="417.700" rx="55" ry="11" fill="#2c2b27"/><ellipse cx="769" cy="416.500" rx="55" ry="11" fill="url(#fin)"/>
<ellipse cx="769" cy="408.200" rx="55" ry="11" fill="#2c2b27"/><ellipse cx="769" cy="407" rx="55" ry="11" fill="url(#fin)"/>
<ellipse cx="769" cy="398.700" rx="55" ry="11" fill="#2c2b27"/><ellipse cx="769" cy="397.500" rx="55" ry="11" fill="url(#fin)"/>
<ellipse cx="769" cy="389.200" rx="56" ry="11" fill="#2c2b27"/><ellipse cx="769" cy="388" rx="56" ry="11" fill="url(#fin)"/>
<ellipse cx="769" cy="379.700" rx="56" ry="11" fill="#2c2b27"/><ellipse cx="769" cy="378.500" rx="56" ry="11" fill="url(#fin)"/>
<ellipse cx="769" cy="370.200" rx="56" ry="11" fill="#2c2b27"/><ellipse cx="769" cy="369" rx="56" ry="11" fill="url(#fin)"/>
<ellipse cx="768" cy="360.700" rx="57" ry="11" fill="#2c2b27"/><ellipse cx="768" cy="359.500" rx="57" ry="11" fill="url(#fin)"/>
<ellipse cx="768" cy="351.200" rx="57" ry="11" fill="#2c2b27"/><ellipse cx="768" cy="350" rx="57" ry="11" fill="url(#fin)"/>
<ellipse cx="768" cy="341.700" rx="58" ry="11" fill="#2c2b27"/><ellipse cx="768" cy="340.500" rx="58" ry="11" fill="url(#fin)"/>
<ellipse cx="768" cy="332.200" rx="60" ry="11" fill="#2c2b27"/><ellipse cx="768" cy="331" rx="60" ry="11" fill="url(#fin)"/>
<ellipse cx="768" cy="322.700" rx="62" ry="12" fill="#2c2b27"/><ellipse cx="768" cy="321.500" rx="62" ry="12" fill="url(#fin)"/>
<ellipse cx="768" cy="312.200" rx="65" ry="13" fill="#2c2b27"/><ellipse cx="768" cy="311" rx="65" ry="13" fill="url(#fin)"/>
<ellipse cx="767" cy="301.200" rx="68" ry="14" fill="#2c2b27"/><ellipse cx="767" cy="300" rx="68" ry="14" fill="url(#fin)"/>
<ellipse cx="766" cy="289.200" rx="69" ry="15" fill="#2c2b27"/><ellipse cx="766" cy="288" rx="69" ry="15" fill="url(#fin)"/>
</g>
<path d="M810,322 L830,314 L833,326 L816,332Z" fill="#8a877b"/><ellipse cx="812" cy="326" rx="5" ry="7" transform="rotate(-15 812 326)" fill="#77746a"/><circle cx="828" cy="327" r="3" fill="#5a584f"/>
<!-- rocker filler & fins -->
<path d="M773,238 L815,222 L853,245 L862,262 L852,290 L790,270Z" fill="#5a584f"/>
<path d="M807,253 L837,250 L850,270 L850,283 L833,290 L807,280Z" fill="#4c4b45"/>
<path d="M805,260 L835,253 M807,266 L838,258 M807,272 L838,265 M808,278 L834,272 M838,252 L848,272 L843,288" fill="none"/>
<!-- upper tube -->
<path d="M797,162 L827,150 L846,197 L820,190Z" fill="url(#sh)"/>
<path d="M797,162 C795,156 822,145 827,150 C829,156 802,168 797,162Z" fill="#8d8a7f"/>
<path d="M802,170 L832,159" fill="none" stroke-width=".6"/>
<!-- rocker block -->
<path d="M790,185 L887,210 L903,223 L893,248 L873,252 L853,245 L813,220 L803,250 L773,240Z" fill="#6f6c62"/>
<path d="M813,220 L853,245 L873,252 L873,240 L880,232 L887,210 L795,187Z" fill="#827f73"/>
<path d="M880,232 L903,223 L893,248 L873,252Z" fill="url(#sh)"/>
<path d="M773,240 L790,185 L795,187 L785,230 Z" fill="#5f5d54"/>
<path d="M782,225 L807,232 M790,185 L887,210 L885,214 L792,190 M803,247 L813,220 M795,225 L793,243 M875,228 L903,220" fill="none"/>
<!-- intake -->
<path d="M687,233 L695,223 L710,222 L797,250 L805,267 L805,277 L780,290 L770,283 L707,280 Z" fill="#6a675e"/>
<path d="M687,233 L695,223 L710,222 L797,250 L803,262 L795,272 C790,272 780,272 778,270 L700,245 C695,243 690,238 687,233Z" fill="#4c4b45"/>
<path d="M700,226 L786,254 C798,258 800,268 790,271 C785,273 700,247 700,247 C690,243 690,228 700,226Z" fill="#8a877b"/>
<ellipse cx="787" cy="262" rx="5" ry="7" transform="rotate(-20 787 262)" fill="#c9c6bc"/>
<circle cx="727" cy="246" r="2.800" fill="#3a3935"/><circle cx="736" cy="235" r="2.200" fill="#3a3935"/>
<path d="M700,247 L720,282 M707,280 L715,262 M770,283 L805,267" fill="none"/>
<path d="M720,270 L780,290 L745,298 L700,285Z" fill="#5f5d54"/>
<!-- back magneto -->
<path d="M927,480 L937,473 L950,482 L938,488 C933,490 925,486 927,480Z" fill="#66645b"/>
<path d="M960,485 L977,472 L997,471 L1017,490 L1040,518 L1045,537 L1038,570 L977,592 L950,582Z" fill="#76736a"/>
<path d="M960,483 C965,475 980,470 997,471 C1010,478 1030,505 1040,518 L1032,523 L1012,518 L1010,505 L980,515 L970,490Z" fill="url(#hood)"/>
<path d="M980,515 L1010,505 L1012,518 L1032,523 L1042,520 L978,540Z" fill="#6a675e"/>
<path d="M978,540 L1042,520 L1045,537 L1038,570 L977,592Z" fill="#77746a"/>
<path d="M937,498 C940,488 950,484 960,485 C966,486 970,488 972,494 C978,515 977,550 967,583 L950,582 C944,560 935,530 935,510Z" fill="#45443f"/>
<path d="M963,497 C970,520 966,555 958,580" fill="none" stroke="#7b786e" stroke-width="3"/>
<path d="M982,528 L998,525 L998,543 L983,552Z" fill="#6f6c62"/>
<path d="M1000,540 V580" fill="none"/>
<path d="M1023,485 C1026,482 1033,481 1034,486 L1035,497 L1030,522 L1026,520Z" fill="#4c4b45"/>
<path d="M950,583 L978,592 L1038,568 L1038,573 L980,596 L950,587Z" fill="#5f5d54"/>
<!-- bracket plate -->
<path d="M843,625 L880,630 L950,583 L980,596 L960,625 L900,690 L860,645 L790,672 L786,664Z" fill="#6b685f"/>
<path d="M790,672 L860,645 L842,675 Z" fill="#4a4943"/>
<!-- oil tank -->
<path d="M847,558 L880,570 L880,630 L845,623Z" fill="#4a4943"/>
<path d="M880,570 L948,542 L948,603 L880,630Z" fill="#75726a"/>
<path d="M847,558 L923,535 L948,542 L880,570Z" fill="#6b685f"/>
<path d="M848,555 C850,530 870,520 885,520 C905,520 920,530 922,543 C905,552 885,562 876,562 C865,560 855,558 848,555Z" fill="url(#dome)"/>
<path d="M878,517 C880,513 893,510 905,515 L905,525 C895,530 880,527 878,522Z" fill="#8d8a7e"/><ellipse cx="891" cy="516" rx="11" ry="4" fill="#99968a"/>
<ellipse cx="919" cy="578" rx="10" ry="12" fill="#76736a"/><ellipse cx="919" cy="580" rx="6" ry="8" fill="#9a978b"/>
<circle cx="872" cy="585" r="1.300" fill="#222"/><circle cx="875" cy="620" r="1.300" fill="#222"/>
<!-- front mag -->
<path d="M827,538 L840,547 L846,582 L832,582Z" fill="#55534c"/>
<path d="M832,580 L850,588 L850,607 L833,613Z" fill="#807d71"/>
<path d="M850,588 L865,593 L863,632 L848,627Z" fill="#4f4e48"/>
<path d="M770,570 L775,555 L798,543 L827,538 L832,582 L810,597 L792,603Z" fill="url(#hood)"/>
<path d="M775,556 C785,548 805,542 815,542 C808,548 805,552 808,600 L792,603 L770,570Z" fill="#6f6c62" opacity=".5"/>
<path d="M753,590 C758,577 770,571 780,572 L792,603 L788,620 L773,625 L757,613Z" fill="url(#hood)"/>
<path d="M788,628 L832,610 L836,606 L836,645 L832,647 L790,665 L770,658 L770,630Z" fill="#74716a"/>
<path d="M770,632 L788,628 L788,665 L770,658Z" fill="#85827a"/>
<path d="M770,630 L832,606 L835,612 L772,636" fill="#6a675e"/>
<path d="M750,597 C752,590 758,590 760,595 L758,625 L752,625Z" fill="#6a675e"/><circle cx="755" cy="598" r="1.500" fill="#ddd"/>
<ellipse cx="753" cy="643" rx="15" ry="19" fill="#4a4943"/>
<path d="M763,628 C773,638 773,652 765,660" fill="none" stroke-width="1.500"/>
<!-- disc -->
<ellipse cx="926" cy="644" rx="44" ry="57" transform="rotate(8 926 644)" fill="url(#disc)"/>
<path d="M886,632 C884,660 898,695 918,700" fill="none"/>
<g fill="#56544c" stroke-width=".6"><circle cx="931" cy="602" r="2.500"/><circle cx="953" cy="605" r="2.500"/><circle cx="908" cy="623" r="2.500"/><circle cx="900" cy="657" r="2.500"/><circle cx="908" cy="684" r="2.500"/><circle cx="931" cy="688" r="2.500"/><circle cx="962" cy="632" r="2.500"/></g>
<!-- shaft -->
<path d="M930,627 L962,637 L953,669 L921,660 C915,650 922,630 930,627Z" fill="url(#tV)"/>
<!-- front flange -->
<ellipse cx="992" cy="665" rx="40" ry="57" transform="rotate(10 992 665)" fill="#66635a" stroke-width="1"/>
<ellipse cx="995" cy="665" rx="40" ry="57" transform="rotate(10 995 665)" fill="#77746a"/>
<ellipse cx="997" cy="666" rx="29" ry="40" transform="rotate(10 997 666)" fill="#716e65"/>
<ellipse cx="997" cy="666" rx="24" ry="33" transform="rotate(10 997 666)" fill="#7a776c"/>
<ellipse cx="997" cy="666" rx="18" ry="26" transform="rotate(10 997 666)" fill="#6d6a61"/>
<path d="M990,655 L1012,655 C1020,662 1020,680 1010,685 L992,680 C985,675 985,660 990,655Z" fill="url(#tV)"/>
<ellipse cx="1012" cy="670" rx="9" ry="14" transform="rotate(10 1012 670)" fill="#85827a"/>
<ellipse cx="1012" cy="670" rx="6" ry="10" transform="rotate(10 1012 670)" fill="#5f5d55"/>
<g fill="#56544c" stroke-width=".6"><circle cx="998" cy="623" r="2.200"/><circle cx="1020" cy="627" r="2.200"/><circle cx="976" cy="645" r="2.200"/><circle cx="1029" cy="654" r="2.200"/><circle cx="966" cy="679" r="2.200"/><circle cx="1020" cy="688" r="2.200"/><circle cx="976" cy="706" r="2.200"/><circle cx="998" cy="711" r="2.200"/></g>
<!-- lower box -->
<path d="M548,817 L554,808 L590,825 L618,832 L641,822 L679,813 L700,800 L702,877 L686,890 L620,913 L548,885Z" fill="#76746a"/>
<path d="M548,817 L590,827 L615,838 L617,910 L548,885Z" fill="#55544d"/>
<path d="M615,838 L618,832 L640,822 L645,832 L645,895 L620,910 L617,908Z" fill="#8a877d"/>
<path d="M625,835 V908 M636,828 V900 M640,825 V898 M645,832 V895 M686,812 V880 M679,813 V882 M651,830 L679,818" fill="none"/>
<!-- bottom bracket -->
<path d="M569,895 L612,912 L650,890 L686,890 L686,915 L658,947 L582,976 C570,965 560,945 559,930 C562,922 565,920 569,917Z" fill="#55544d"/>
<path d="M612,912 L607,955 L582,976 C570,965 560,945 559,930 C562,922 565,920 569,917 L569,895Z" fill="#5f5d54"/>
<path d="M612,916 L640,905 L658,947 L600,965 L610,945Z" fill="#4a4943"/>
<path d="M620,925 L655,912 L660,945 L600,965 L612,945Z" fill="#6d6a60"/>
<ellipse cx="576" cy="941" rx="9" ry="11" fill="#6f6c62"/><ellipse cx="577" cy="942" rx="6" ry="8.500" fill="#55534c"/>
<ellipse cx="650" cy="913" rx="8" ry="10" fill="#3f3e39"/><ellipse cx="653" cy="912" rx="2.500" ry="6" fill="#fff" stroke="none"/>
<circle cx="577" cy="922" r="1.500" fill="#3f3e39"/><circle cx="578" cy="960" r="1.500" fill="#3f3e39"/><circle cx="677" cy="914" r="1.500" fill="#3f3e39"/><circle cx="601" cy="945" r="1.500" fill="#3f3e39"/>
<!-- lower blob + pipe -->
<path d="M553,785 C552,770 565,765 580,772 L632,785 L636,818 L622,832 C600,832 590,822 580,818 C565,812 553,800 553,785Z" fill="#7b786e"/>
<path d="M562,790 C565,805 575,812 590,812 M590,812 C605,815 620,800 632,795" fill="none"/>
<path d="M605,709 C615,702 640,705 643,720 L637,733 C638,750 640,770 630,787 C615,800 585,790 575,775 C585,770 593,770 597,760 L597,730Z" fill="url(#pH)"/>
<path d="M605,709 C625,712 640,720 637,733 C625,722 612,717 598,718Z" fill="#8d8a7f"/>
<path d="M596,770 C610,778 625,778 633,774" fill="none"/>
</g>

<!-- BROWSER -->
<rect x="3.5" y="134.5" width="299" height="23" fill="#f0f0f0" stroke="#c8c8c8"/>
<path d="M8,146 L13,143 V149Z M13,146 L18,143 V149Z" fill="#333"/>
<text x="28" y="150" font-size="10.5" fill="#666">BROWSER</text>
<circle cx="286.5" cy="146" r="4.5" fill="#222"/><rect x="283.5" y="145" width="6" height="2" fill="#fff"/>
<path d="M298.5,141 V151 M300.5,141 V151" stroke="#aaa"/>
<rect x="7" y="164" width="6" height="512" rx="2" fill="#999"/><rect x="7" y="676" width="6" height="359" fill="#ccc"/>

<!-- TREE ROOT -->
<rect x="39" y="164" width="188" height="20" fill="#f0f0f0"/>
<rect x="64" y="166" width="138" height="16" fill="#8c8c8c"/>
<use href="#op" x="27" y="174"/><use href="#by" x="49" y="174"/><use href="#cp" x="75" y="174"/>
<text x="97" y="178" font-size="11" font-weight="bold" fill="#fff">Wright J-5 V30 v7</text>
<circle cx="212.5" cy="174" r="6" fill="#f8f8f8" stroke="#333"/><circle cx="212.5" cy="174" r="2.5" fill="#222"/>

<!-- TREE ROWS -->
<g transform="translate(0,198)"><rect x="57" y="-10" width="134" height="20" fill="#f0f0f0"/><use href="#ar" x="43"/><text class="t" x="90" y="4">Document Settings</text><path transform="translate(68,0)" d="M-2,-8 H2 L2.5,-5.5 L4.8,-6.5 L7,-3.5 L5.2,-1.5 V1.5 L7,3.5 L4.8,6.5 L2.5,5.5 L2,8 H-2 L-2.5,5.5 L-4.8,6.5 L-7,3.5 L-5.2,1.5 V-1.5 L-7,-3.5 L-4.8,-6.5 L-2.5,-5.5Z M0,-2.8 A2.8,2.8 0 1 0 .01,-2.8Z" fill="#555" fill-rule="evenodd"/></g>
<g transform="translate(0,222)"><rect x="57" y="-10" width="110" height="20" fill="#f0f0f0"/><use href="#ar" x="43"/><use href="#fd" x="68"/><text class="t" x="90" y="4">Named Views</text></g>
<g transform="translate(0,246)"><rect x="57" y="-10" width="114" height="20" fill="#f0f0f0"/><use href="#ar" x="43"/><use href="#fd" x="68"/><text class="t" x="90" y="4">Selection Sets</text></g>
<g transform="translate(0,270)"><rect x="57" y="-10" width="95" height="20" fill="#f0f0f0"/><use href="#ar" x="43"/><use href="#bl" x="68"/><use href="#fd" x="93"/><text class="t" x="115" y="4">Origin</text></g>
<g transform="translate(0,294)"><rect x="57" y="-10" width="115" height="20" fill="#f0f0f0"/><use href="#ar" x="43"/><use href="#by" x="68"/><use href="#fd" x="93"/><text class="t" x="115" y="4">Sketches</text></g>
<g transform="translate(0,318)"><rect x="57" y="-10" width="131" height="20" fill="#f0f0f0"/><use href="#ar" x="43"/><use href="#bl" x="68"/><use href="#fd" x="93"/><text class="t" x="115" y="4">Construction</text></g>
<g transform="translate(0,342)"><rect x="57" y="-10" width="115" height="20" fill="#f0f0f0"/><use href="#op" x="44"/><use href="#by" x="68"/><use href="#cp" x="93"/><text class="t" x="115" y="4" xml:space="preserve">Airbox  :1</text></g>
<g transform="translate(0,366)"><rect x="75" y="-10" width="95" height="20" fill="#f0f0f0"/><use href="#ar" x="61"/><use href="#bl" x="86"/><use href="#fd" x="111"/><text class="t" x="133" y="4">Origin</text></g>
<g transform="translate(0,390)"><rect x="75" y="-10" width="103" height="20" fill="#f0f0f0"/><use href="#op" x="62"/><use href="#by" x="86"/><use href="#fd" x="111"/><text class="t" x="133" y="4">Bodies</text></g>
<g transform="translate(0,414)"><rect x="93" y="-10" width="119" height="20" fill="#f0f0f0"/><use href="#by" x="104"/><use href="#bd" x="129"/><text class="t" x="151" y="4">Airbox R-1</text></g>
<g transform="translate(0,438)"><rect x="75" y="-10" width="115" height="20" fill="#f0f0f0"/><use href="#ar" x="61"/><use href="#by" x="86"/><use href="#fd" x="111"/><text class="t" x="133" y="4">Sketches</text></g>
<g transform="translate(0,462)"><rect x="75" y="-10" width="132" height="20" fill="#f0f0f0"/><use href="#ar" x="61"/><use href="#bl" x="86"/><use href="#fd" x="111"/><text class="t" x="133" y="4">Construction</text></g>
<g transform="translate(0,486)"><rect x="75" y="-10" width="136" height="20" fill="#f0f0f0"/><use href="#op" x="62"/><use href="#by" x="86"/><use href="#cp" x="111"/><text class="t" x="133" y="4">Airbob Rear:1</text></g>
<g transform="translate(0,510)"><rect x="93" y="-10" width="95" height="20" fill="#f0f0f0"/><use href="#ar" x="79"/><use href="#bl" x="104"/><use href="#fd" x="129"/><text class="t" x="151" y="4">Origin</text></g>
<g transform="translate(0,534)"><rect x="93" y="-10" width="103" height="20" fill="#f0f0f0"/><use href="#op" x="80"/><use href="#by" x="104"/><use href="#fd" x="129"/><text class="t" x="151" y="4">Bodies</text></g>
<g transform="translate(0,558)"><rect x="111" y="-10" width="124" height="20" fill="#f0f0f0"/><use href="#by" x="122"/><use href="#bd" x="147"/><text class="t" x="169" y="4">Airbox rear</text></g>
<g transform="translate(0,582)"><rect x="93" y="-10" width="115" height="20" fill="#f0f0f0"/><use href="#ar" x="79"/><use href="#bl" x="104"/><use href="#fd" x="129"/><text class="t" x="151" y="4">Sketches</text></g>
<g transform="translate(0,606)"><rect x="93" y="-10" width="132" height="20" fill="#f0f0f0"/><use href="#ar" x="79"/><use href="#bl" x="104"/><use href="#fd" x="129"/><text class="t" x="151" y="4">Construction</text></g>
<g transform="translate(0,630)"><rect x="93" y="-10" width="153" height="20" fill="#f0f0f0"/><use href="#op" x="80"/><use href="#by" x="104"/><use href="#cp" x="129"/><text class="t" x="151" y="4">Accesory Drive:1</text></g>
<g transform="translate(0,654)"><rect x="111" y="-10" width="96" height="20" fill="#f0f0f0"/><use href="#ar" x="97"/><use href="#bl" x="122"/><use href="#fd" x="147"/><text class="t" x="169" y="4">Origin</text></g>
<g transform="translate(0,678)"><rect x="111" y="-10" width="102" height="20" fill="#f0f0f0"/><use href="#ar" x="97"/><use href="#by" x="122"/><use href="#fd" x="147"/><text class="t" x="169" y="4">Bodies</text></g>
<g transform="translate(0,702)"><rect x="111" y="-10" width="115" height="20" fill="#f0f0f0"/><use href="#ar" x="97"/><use href="#bl" x="122"/><use href="#fd" x="147"/><text class="t" x="169" y="4">Sketches</text></g>
<g transform="translate(0,726)"><rect x="111" y="-10" width="117" height="20" fill="#f0f0f0"/><use href="#ar" x="97"/><use href="#by" x="122"/><use href="#bx" x="147"/><text class="t" x="169" y="4">Oil Pump:1</text></g>
<g transform="translate(0,750)"><rect x="111" y="-10" width="123" height="20" fill="#f0f0f0"/><use href="#ar" x="97"/><use href="#by" x="122"/><use href="#bx" x="147"/><text class="t" x="169" y="4">Fuel Pump:1</text></g>
<g transform="translate(0,774)"><rect x="57" y="-10" width="127" height="20" fill="#f0f0f0"/><use href="#ar" x="43"/><use href="#by" x="68"/><use href="#bx" x="93"/><text class="t" x="115" y="4">Crankcase:1</text></g>
<g transform="translate(0,798)"><rect x="57" y="-10" width="127" height="20" fill="#f0f0f0"/><use href="#ar" x="43"/><use href="#by" x="68"/><use href="#bx" x="93"/><text class="t" x="115" y="4">Case Front:1</text></g>
<g transform="translate(0,822)"><rect x="57" y="-10" width="195" height="20" fill="#f0f0f0"/><use href="#ar" x="43"/><use href="#by" x="68"/><use href="#cp" x="93"/><text class="t" x="115" y="4">Crank Nose- Mag Mounts:1</text></g>
<g transform="translate(0,846)"><rect x="57" y="-10" width="183" height="20" fill="#f0f0f0"/><use href="#ar" x="43"/><use href="#by" x="68"/><use href="#bx" x="93"/><text class="t" x="115" y="4">Front Bearing Housing:1</text></g>
<g transform="translate(0,870)"><rect x="57" y="-10" width="131" height="20" fill="#f0f0f0"/><use href="#ar" x="43"/><use href="#by" x="68"/><use href="#cp" x="93"/><text class="t" x="115" y="4">#1 Cylinder:1</text></g>
<g transform="translate(0,894)"><rect x="57" y="-10" width="176" height="20" fill="#f0f0f0"/><use href="#ar" x="43"/><use href="#by" x="68"/><use href="#cp" x="93"/><text class="t" x="115" y="4">Rocker Housing:1</text><circle cx="218.5" r="6" fill="#f8f8f8" stroke="#333"/></g>
<g transform="translate(0,918)"><rect x="57" y="-10" width="183" height="20" fill="#f0f0f0"/><use href="#ar" x="43"/><use href="#by" x="68"/><use href="#bx" x="93"/><text class="t" x="115" y="4">Push Rod Base Mount:1</text></g>
<g transform="translate(0,942)"><rect x="57" y="-10" width="103" height="20" fill="#f0f0f0"/><use href="#ar" x="43"/><use href="#bl" x="68"/><use href="#bx" x="93"/><text class="t" x="115" y="4">scale:1</text></g>
<g transform="translate(0,966)"><rect x="57" y="-10" width="103" height="20" fill="#f0f0f0"/><use href="#ar" x="43"/><use href="#by" x="68"/><use href="#bx" x="93"/><text class="t" x="115" y="4">Intake:1</text></g>
<g transform="translate(0,990)"><rect x="57" y="-10" width="103" height="20" fill="#f0f0f0"/><use href="#ar" x="43"/><use href="#by" x="68"/><use href="#cp" x="93"/><text class="t" x="115" y="4">Mag 1:1</text></g>
<g transform="translate(0,1014)"><rect x="57" y="-10" width="103" height="20" fill="#f0f0f0"/><use href="#ar" x="43"/><use href="#by" x="68"/><use href="#bx" x="93"/><text class="t" x="115" y="4">Mount:1</text></g>
<g transform="translate(0,1038)"><rect x="57" y="-10" width="135" height="20" fill="#f0f0f0"/><use href="#ar" x="43"/><use href="#by" x="68"/><use href="#bx" x="93"/><text class="t" x="115" y="4">cylinder ring:1</text></g>

<!-- COMMENTS -->
<rect x="3.5" y="1058.5" width="299" height="24" fill="#f0f0f0" stroke="#c8c8c8"/>
<text x="28" y="1074" font-size="10.5" fill="#666">COMMENTS</text>
<circle cx="286.5" cy="1070" r="4.5" fill="#222"/><path d="M283.5,1070 H289.5 M286.5,1067 V1073" stroke="#fff" stroke-width="1.5"/>
<path d="M298.5,1065 V1075 M300.5,1065 V1075" stroke="#aaa"/>

<!-- NAV BAR -->
<rect x="635" y="1059" width="245" height="24" fill="#f0f0f0"/>
<g stroke="#444" fill="none">
<ellipse cx="646" cy="1072" rx="7" ry="3"/><path d="M646,1063 V1079" stroke-width="1.3"/><path d="M644,1066 L646,1063 L648,1066 M644,1077 L646,1079 L648,1077"/>
<path d="M672,1068 H686 V1077 H672Z M675,1071 H683 V1074 H675Z M672,1068 L674,1064 L682,1065"/>
<path d="M700,1076 L696,1069 L698,1068 L701,1072 V1064 H703 V1070 V1063 H705 V1070 V1064 H707 V1071 L708,1066 H710 V1074 L707,1079 H702Z" fill="#fff"/>
<circle cx="729" cy="1070" r="4.5" fill="#eef"/><path d="M732,1073 L736,1078" stroke-width="2"/><path d="M734,1065 H739 M736.5,1063 V1067 M734,1069 H739"/>
<circle cx="756" cy="1070" r="6" fill="#eef"/><path d="M760,1075 L765,1080" stroke-width="2"/><rect x="750" y="1063" width="14" height="14" stroke-dasharray="2 1" stroke="#888"/>
<rect x="791" y="1064" width="15" height="11" fill="#a9c0e2"/><path d="M798,1075 V1078 M794,1079 H802"/>
<rect x="822" y="1064" width="14" height="14" fill="#ccc"/><path d="M822,1067.5 H836 M822,1071 H836 M822,1074.5 H836 M825.5,1064 V1078 M829,1064 V1078 M832.5,1064 V1078" stroke="#777"/>
<path d="M852.5,1065.5 H866.5 V1077.5 H852.5Z M859.5,1065.5 V1077.5 M852.5,1071.5 H866.5" stroke="#3d6ab0" fill="#b9cde8"/>
</g>
<use href="#dn" x="662" y="1071"/><use href="#dn" x="773" y="1071"/><use href="#dn" x="811" y="1071"/><use href="#dn" x="842" y="1071"/><use href="#dn" x="873" y="1071"/>

<!-- TIMELINE -->
<rect y="1087" width="1515" height="3" fill="#ccc"/><rect y="1090" width="1515" height="47" fill="#f0f0f0"/>
<path d="M10,1110 H12.5 V1124 H10Z M22,1110 V1124 L13,1117Z M34,1117 L43,1110 V1124Z M44.5,1113 H47 V1121 H44.5Z M60,1109.5 L72,1117 L60,1125Z M84,1113 H86.5 V1121 H84Z M88,1110 L97,1117 L88,1124Z M110,1110 L119,1117 L110,1124Z M120,1110 H122.5 V1124 H120Z" fill="#444"/>
<rect x="150" y="1128" width="1299" height="2" fill="#ccc"/><path d="M136,1129 H140 M142,1129 H146" stroke="#ccc" stroke-width="2"/>
<path stroke="#ccc" stroke-width="1.5" d="M153,1123V1128M177,1123V1128M201,1123V1128M225,1123V1128M249,1123V1128M273,1123V1128M297,1123V1128M321,1123V1128M345,1123V1128M369,1123V1128M393,1123V1128M417,1123V1128M441,1123V1128M465,1123V1128M489,1123V1128M513,1123V1128M537,1123V1128M561,1123V1128M585,1123V1128M609,1123V1128M633,1123V1128M657,1123V1128M681,1123V1128M705,1123V1128M729,1123V1128M753,1123V1128M777,1123V1128M801,1123V1128M825,1123V1128M849,1123V1128M873,1123V1128M897,1123V1128M921,1123V1128M945,1123V1128M969,1123V1128M993,1123V1128M1017,1123V1128M1041,1123V1128M1065,1123V1128M1089,1123V1128M1113,1123V1128M1137,1123V1128M1161,1123V1128M1185,1123V1128M1209,1123V1128M1233,1123V1128M1257,1123V1128M1281,1123V1128M1305,1123V1128M1329,1123V1128M1353,1123V1128M1377,1123V1128M1401,1123V1128M1425,1123V1128M1449,1123V1128"/>
<g transform="translate(0,1112)">
<use href="#te" x="153"/><use href="#ts" x="177"/><use href="#te" x="201"/><use href="#ts" x="225"/><use href="#te" x="249"/><use href="#tp" x="273"/><use href="#ts" x="297"/>
<g transform="translate(321,0)"><path d="M0,-8 L8,0 L0,8 L-8,0Z" fill="#eee" stroke="#444"/><path d="M-5,-3 L0,-7 L5,-2 L1,2Z" fill="#c98a5a"/><path d="M-3,3 L3,3 L0,6Z" fill="#888"/></g>
<use href="#ts" x="345"/><use href="#te" x="369"/><use href="#ts" x="393"/><use href="#te" x="417"/><use href="#tx" x="441"/><use href="#tx" x="465"/><use href="#tb" x="489"/><use href="#tb" x="513"/><use href="#tb" x="537"/><use href="#ts" x="561"/><use href="#tx" x="585"/><use href="#tx" x="609"/><use href="#ts" x="633"/><use href="#te" x="657"/><use href="#tb" x="681"/><use href="#ts" x="705"/><use href="#te" x="729"/>
<path transform="translate(753,0)" d="M-7.5,-3 L-3,-7.5 H7.5 V3 L3,7.5 H-5.5 Q-7.5,7.5 -7.5,5.5Z M-7.5,-3 H3 V7.5 M3,-3 L7.5,-7.5" fill="#f3f3f3" stroke="#555"/>
<use href="#ts" x="777"/><use href="#te" x="801"/>
<g transform="translate(825,0)"><path d="M-8,1 L-1,-7 L8,-3 V7 H-5Z" fill="#e8e8e8" stroke="#555"/><path d="M-6,-1 L-1,-7 L6,-4 L1,3Z" fill="#87a3cc" stroke="#555" stroke-width=".6"/></g>
<use href="#ts" x="849"/><use href="#te" x="873"/><use href="#tp" x="897"/><use href="#ts" x="921"/><use href="#te" x="945"/>
<g transform="translate(969,0)" fill="none" stroke="#555"><circle cx="-4.5" cy="-5" r="3" fill="#eee"/><circle cx="4" cy="3.5" r="4" fill="#ddd"/><path d="M-5,-1 V5 H-1 M-3,3 L-1,5 L-3,7" stroke="#2a6ab0"/></g>
<use href="#tm" x="993"/><use href="#tb" x="1017"/><use href="#ts" x="1041"/><use href="#te" x="1065"/><use href="#ts" x="1089"/><use href="#te" x="1113"/>
<g transform="translate(1137,0)" fill="#7fa0cf" stroke="#333"><circle cy="-4.5" r="3.5"/><circle cx="-5" cy="1" r="3.5"/><circle cx="5" cy="1" r="3.5"/><circle cy="5.5" r="3"/></g>
<use href="#ts" x="1161"/><use href="#te" x="1185"/><use href="#tsb" x="1209"/><use href="#tb" x="1233"/><use href="#tb" x="1257"/><use href="#tb" x="1281"/><use href="#tb" x="1305"/><use href="#tb" x="1329"/><use href="#tb" x="1353"/><use href="#tb" x="1377"/><use href="#tb" x="1401"/><use href="#tm" x="1425"/><use href="#tm" x="1449"/>
</g>
<path d="M1454,1098 H1467 L1461.5,1108 V1130 H1460 V1108Z" fill="#555"/>
<path transform="translate(1500,1117)" d="M-2,-8 H2 L2.5,-5.5 L4.8,-6.5 L7,-3.5 L5.2,-1.5 V1.5 L7,3.5 L4.8,6.5 L2.5,5.5 L2,8 H-2 L-2.5,5.5 L-4.8,6.5 L-7,3.5 L-5.2,1.5 V-1.5 L-7,-3.5 L-4.8,-6.5 L-2.5,-5.5Z M0,-2.8 A2.8,2.8 0 1 0 .01,-2.8Z" fill="#555" fill-rule="evenodd"/>
</svg>
</body></html>
